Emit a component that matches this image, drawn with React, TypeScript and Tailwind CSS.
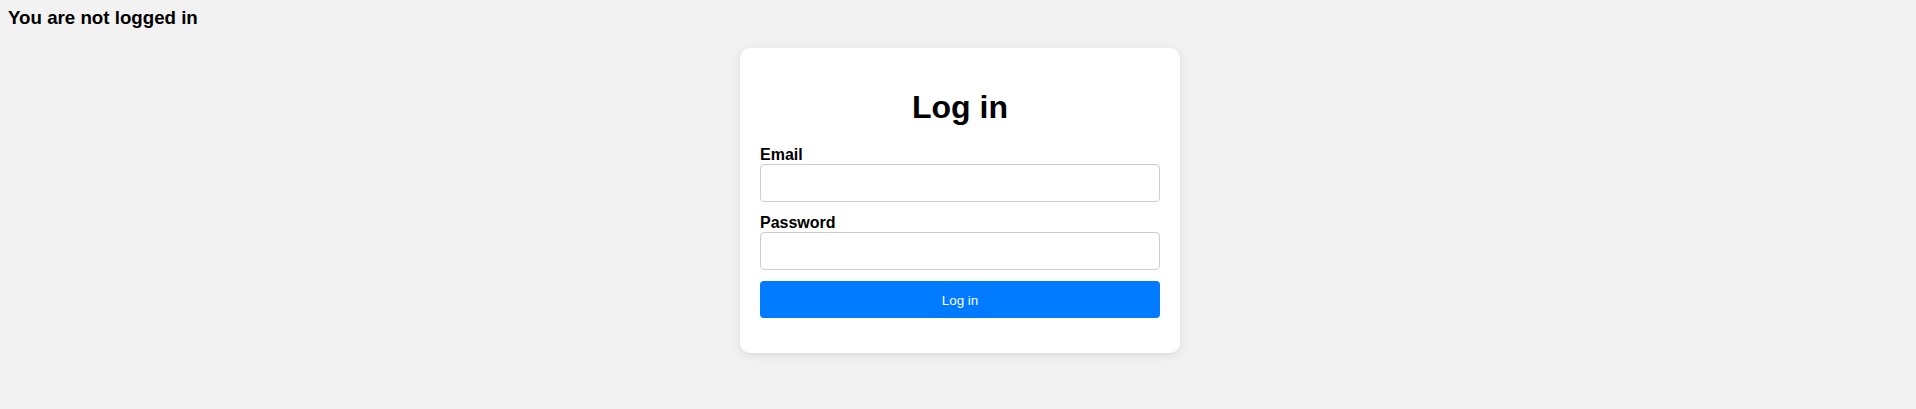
export default function App() {
  return (
    <div className="min-h-screen bg-[#f2f2f2] text-black font-['Liberation_Sans',Arial,sans-serif]">
      <h3 className="pl-2 pt-[7px] text-[18.72px] font-bold leading-[22px]">
        You are not logged in
      </h3>
      <div className="mt-[19px] flex justify-center pl-1">
        <div className="w-[440px] rounded-[10px] bg-white p-5 shadow-[0_2px_10px_rgba(0,0,0,0.1)]">
          <h1 className="mt-[21px] mb-[19px] text-center text-[32px] font-bold leading-[37px]">
            Log in
          </h1>
          <form onSubmit={(e) => e.preventDefault()}>
            <div className="mb-[11px]">
              <label htmlFor="email" className="block pt-[1px] text-base font-bold leading-[18px]">
                Email
              </label>
              <input
                id="email"
                type="email"
                className="block h-[38px] w-full rounded-[4px] border border-[#cccccc] bg-white px-2 text-base outline-none"
              />
            </div>
            <div className="mb-[11px]">
              <label htmlFor="password" className="block pt-[1px] text-base font-bold leading-[18px]">
                Password
              </label>
              <input
                id="password"
                type="password"
                className="block h-[38px] w-full rounded-[4px] border border-[#cccccc] bg-white px-2 text-base outline-none"
              />
            </div>
            <button
              type="submit"
              className="mb-[15px] block h-[37px] w-full rounded-[4px] bg-[#007bff] pt-[2px] text-[13.33px] text-white"
            >
              Log in
            </button>
          </form>
        </div>
      </div>
    </div>
  );
}
